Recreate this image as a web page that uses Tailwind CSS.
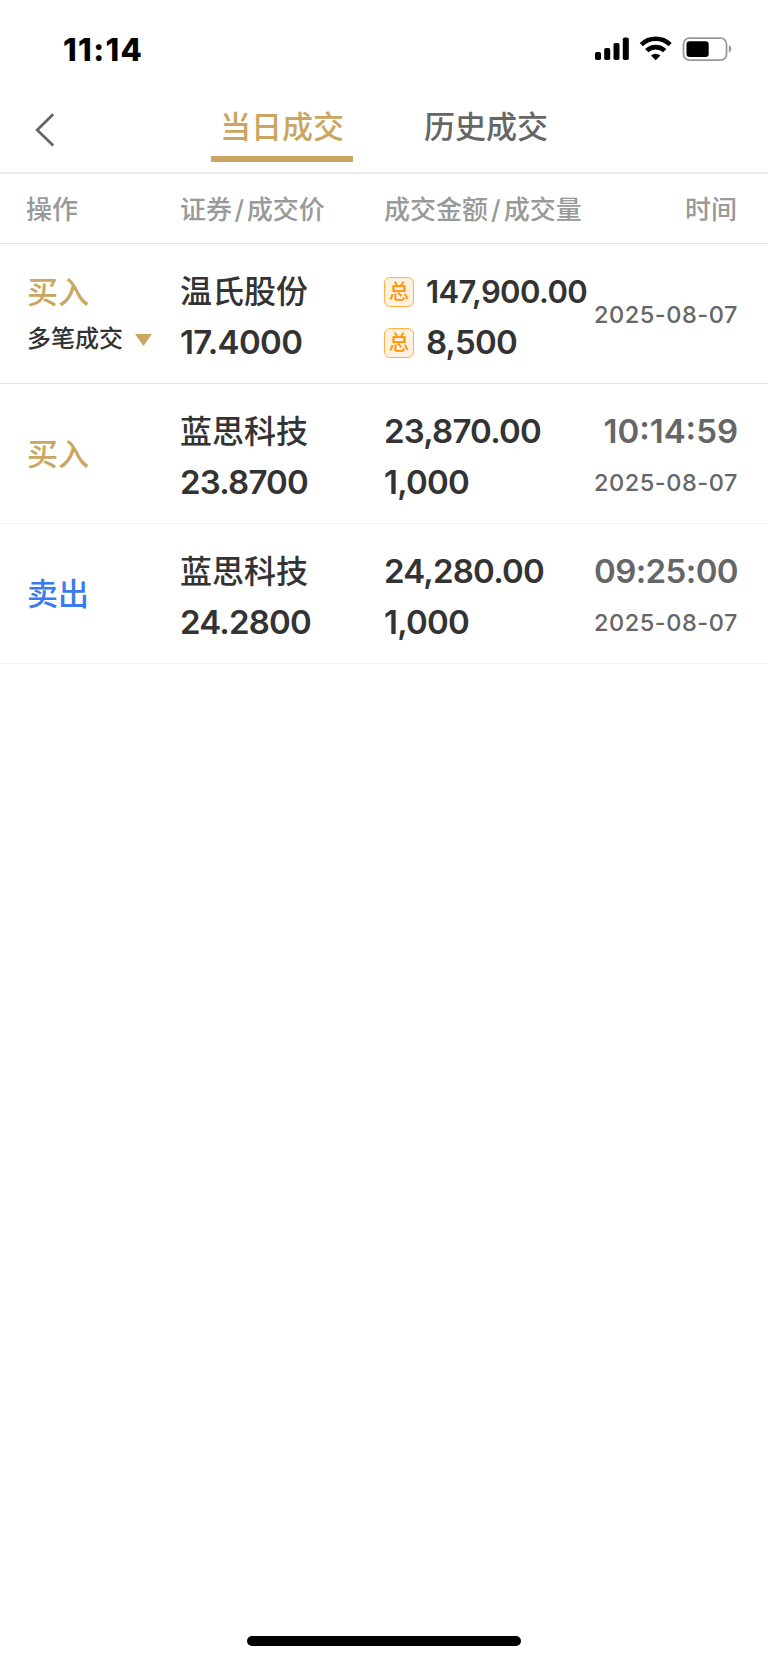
<!DOCTYPE html>
<html lang="zh-CN">
<head>
  <meta charset="UTF-8">
  <title>当日成交</title>
  <script src="https://cdn.jsdelivr.net/npm/@tailwindcss/browser@4"></script>
</head>
<body class="bg-white">
  <div class="w-[768px] h-[1663px] flex flex-col overflow-hidden bg-white font-['Inter','Noto_Sans_CJK_SC',sans-serif] text-[#333333] whitespace-nowrap">
    <!-- Status bar -->
    <div class="h-[98px] flex justify-between pl-[63px] pr-[35px]">
      <div class="text-[31px] leading-[99px] font-extrabold tracking-[1.4px] text-black">11:14</div>
      <div class="flex items-start pt-[36px]">
        <svg width="138" height="26" viewBox="0 0 138 26">
          <g fill="#000">
            <rect x="0" y="16" width="6" height="8" rx="1.8"/>
            <rect x="9.2" y="12" width="6" height="12" rx="1.8"/>
            <rect x="18.5" y="7" width="6" height="17" rx="1.8"/>
            <rect x="27.8" y="1.5" width="6" height="22.5" rx="1.8"/>
          </g>
          <g fill="none" stroke="#000" stroke-width="4.6">
            <path d="M46.3 8.6a20.8 20.8 0 0 1 28.8 0"/>
            <path d="M51.7 14.7a13 13 0 0 1 18 0"/>
          </g>
          <path d="M56 19.5a7 7 0 0 1 9.4 0L60.7 24.2z" fill="#000"/>
          <rect x="88.5" y="2.2" width="43" height="22" rx="6" fill="none" stroke="#999" stroke-width="1.8"/>
          <rect x="91.5" y="5.2" width="22.2" height="15.8" rx="3.2" fill="#000"/>
          <path d="M133.8 9.2c3.4 1 3.4 6.4 0 7.4z" fill="#999"/>
        </svg>
      </div>
    </div>

    <!-- Tabs -->
    <div class="h-[76px] flex items-start border-b-2 border-[#ebebeb]">
      <div class="w-[211px] pl-[35px] pt-[15px]">
        <svg width="20" height="34" viewBox="0 0 20 34" fill="none" stroke="#666" stroke-width="2.8">
          <path d="M18.2 1.2L2.2 17l16 15.6"/>
        </svg>
      </div>
      <div class="w-[142px] h-[64px] border-b-[6px] border-[#cba661] text-center text-[31px] leading-[58px] font-medium text-[#cba661]">当日成交</div>
      <div class="pl-[71px] text-[31px] leading-[58px] font-medium text-[#666666]">历史成交</div>
    </div>

    <!-- Column heads -->
    <div class="h-[70px] grid grid-cols-[154px_204px_1fr_auto] pl-[26px] pr-[31px] border-b border-[#e4e4e4] text-[26px] leading-[72px] font-medium text-[#999999]">
      <div>操作</div>
      <div>证券<span class="px-[2.5px]">/</span>成交价</div>
      <div>成交金额<span class="px-[3px]">/</span>成交量</div>
      <div>时间</div>
    </div>

    <!-- Merged trades -->
    <div class="h-[140px] grid grid-cols-[153px_204px_1fr_auto] pl-[27px] pr-[30px] pt-[23px] border-b border-[#e4e4e4] font-semibold">
      <div class="font-medium">
        <div class="text-[31px] leading-[50px] text-[#cba661]">买入</div>
        <div class="flex items-center text-[24px] leading-[44px]">
          多笔成交
          <svg class="ml-[12px] mt-[1px]" width="17" height="12" viewBox="0 0 17 12"><path d="M0 0h17L8.5 12z" fill="#cba661"/></svg>
        </div>
      </div>
      <div>
        <div class="text-[32px] leading-[50px] font-medium">温氏股份</div>
        <div class="text-[33px] leading-[51px] tracking-[-0.6px]">17.4000</div>
      </div>
      <div>
        <div class="flex items-center text-[31px] leading-[50px] tracking-[-0.6px]">
          <span class="size-[30px] mr-[12px] rounded-[6px] border-[1.5px] border-[#ffb04a] bg-[#fff1e2] text-center text-[20px] leading-[28px] font-medium tracking-normal text-[#ff9500]">总</span>147,900.00
        </div>
        <div class="flex items-center text-[33px] leading-[51px] tracking-[-0.8px]">
          <span class="size-[30px] mr-[12px] rounded-[6px] border-[1.5px] border-[#ffb04a] bg-[#fff1e2] text-center text-[20px] leading-[28px] font-medium tracking-normal text-[#ff9500]">总</span>8,500
        </div>
      </div>
      <div class="text-[23.5px] leading-[95px] font-medium tracking-[0.55px] text-[#666666]">2025-08-07</div>
    </div>

    <!-- Single trades -->
    <div class="h-[140px] grid grid-cols-[153px_204px_1fr_auto] pl-[27px] pr-[30px] pt-[23px] border-b border-[#f2f2f2] font-semibold">
      <div class="text-[31px] leading-[94px] font-medium text-[#cba661]">买入</div>
      <div>
        <div class="text-[32px] leading-[50px] font-medium">蓝思科技</div>
        <div class="text-[33px] leading-[51px] tracking-[-0.8px]">23.8700</div>
      </div>
      <div class="text-[33px] tracking-[-0.8px]">
        <div class="leading-[48px]">23,870.00</div>
        <div class="leading-[54px]">1,000</div>
      </div>
      <div class="text-right text-[#666666]">
        <div class="text-[33px] leading-[48px]">10:14:59</div>
        <div class="text-[23.5px] leading-[55px] font-medium tracking-[0.55px]">2025-08-07</div>
      </div>
    </div>
    <div class="h-[140px] grid grid-cols-[153px_204px_1fr_auto] pl-[27px] pr-[30px] pt-[23px] border-b border-[#f2f2f2] font-semibold">
      <div class="text-[31px] leading-[94px] font-medium text-[#3a7cf0]">卖出</div>
      <div>
        <div class="text-[32px] leading-[50px] font-medium">蓝思科技</div>
        <div class="text-[33px] leading-[51px] tracking-[-0.8px]">24.2800</div>
      </div>
      <div class="text-[33px] tracking-[-0.8px]">
        <div class="leading-[48px]">24,280.00</div>
        <div class="leading-[54px]">1,000</div>
      </div>
      <div class="text-right text-[#666666]">
        <div class="text-[33px] leading-[48px] tracking-[-0.6px]">09:25:00</div>
        <div class="text-[23.5px] leading-[55px] font-medium tracking-[0.55px]">2025-08-07</div>
      </div>
    </div>

    <!-- Home indicator -->
    <div class="mt-auto mb-[17px] mx-auto w-[274px] h-[10px] rounded-full bg-black"></div>
  </div>
</body>
</html>
